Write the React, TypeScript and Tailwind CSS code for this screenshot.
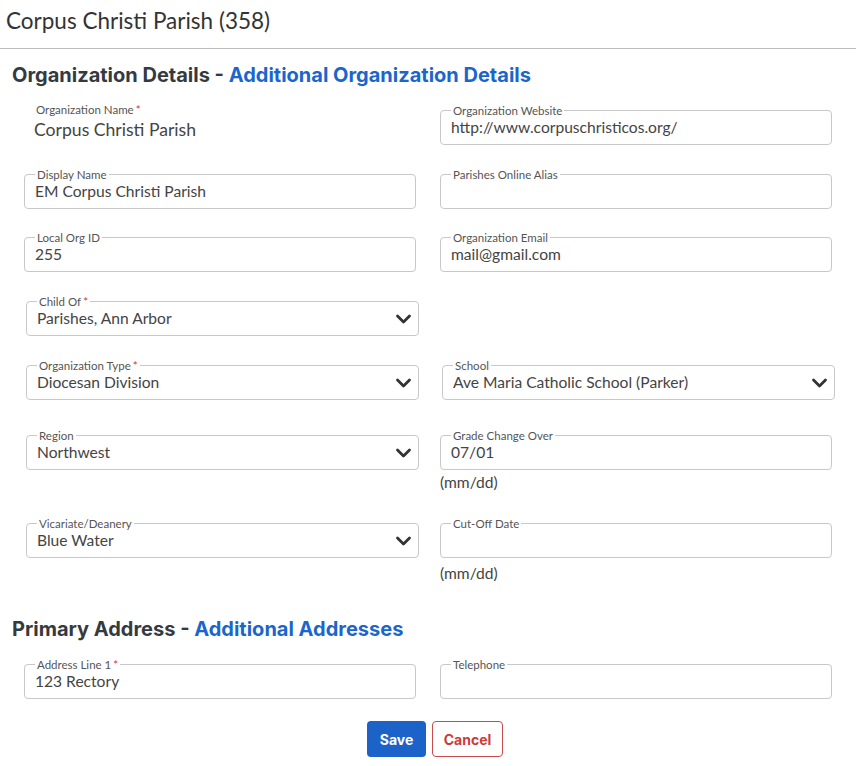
const body = { fontFamily: 'Lato, "Open Sans", sans-serif' };
const head = { fontFamily: 'Inter, Roboto, sans-serif' };

function Chevron() {
  return (
    <svg width="17" height="16" viewBox="0 0 17 16" className="shrink-0">
      <path d="M2.5 5 L8.5 11 L14.5 5" fill="none" stroke="#333" strokeWidth="2.8" strokeLinecap="round" strokeLinejoin="round" />
    </svg>
  );
}

function Label({ text, required }: { text: string; required?: boolean }) {
  return (
    <span className="absolute -top-[8px] left-[10px] bg-white px-[2px] text-[11.5px] leading-[16px] text-[#555]">
      {text}
      {required && <span className="ml-[2px] text-[#e03030]">*</span>}
    </span>
  );
}

function Field({ label, value, required, select, shift }: { label: string; value?: string; required?: boolean; select?: boolean; shift?: boolean }) {
  return (
    <div className={shift ? 'ml-[2px] -mr-[3px]' : ''}>
      <div className={`relative flex h-[35px] items-center rounded-[4px] border border-[#c8c8c8] pl-[10px] pt-[1px] ${select ? 'pr-[6px]' : 'pr-[14px]'}`}>
        <Label text={label} required={required} />
        <span className="flex-1 truncate text-[15.6px] text-[#444]">{value}</span>
        {select && <Chevron />}
      </div>
    </div>
  );
}

function Hint({ gap }: { gap: string }) {
  return <div className={`${gap} text-[15.6px] leading-[20px] text-[#444]`}>(mm/dd)</div>;
}

export default function App() {
  return (
    <div className="min-h-screen bg-white" style={body}>
      <div className="h-[49px] border-b border-[#bdbdbd] pl-[6px] pt-[6px] text-[22.5px] leading-[30px] text-[#333]">
        Corpus Christi Parish (358)
      </div>

      <div className="px-[12px]">
        <h2 className="mt-[12px] text-[20px] font-bold leading-[28px] text-[#343a40]" style={head}>
          Organization Details - <span className="text-[#1a66cc]">Additional Organization Details</span>
        </h2>
      </div>

      <div className="px-6">
        <div className="mt-[21px] grid grid-cols-2 gap-x-6">
          <div className="relative h-[35px]">
            <Label text="Organization Name" required />
            <div className="pl-[10px] pt-[9px] text-[17.6px] leading-[22px] text-[#444]">Corpus Christi Parish</div>
          </div>
          <Field label="Organization Website" value="http://www.corpuschristicos.org/" />
        </div>

        <div className="mt-[29px] grid grid-cols-2 gap-x-6">
          <Field label="Display Name" value="EM Corpus Christi Parish" />
          <Field label="Parishes Online Alias" />
        </div>

        <div className="mt-[28px] grid grid-cols-2 gap-x-6">
          <Field label="Local Org ID" value="255" />
          <Field label="Organization Email" value="mail@gmail.com" />
        </div>

        <div className="mt-[29px] grid grid-cols-2 gap-x-6">
          <Field label="Child Of" value="Parishes, Ann Arbor" required select shift />
          <div />
        </div>

        <div className="mt-[29px] grid grid-cols-2 gap-x-6">
          <Field label="Organization Type" value="Diocesan Division" required select shift />
          <Field label="School" value="Ave Maria Catholic School (Parker)" select shift />
        </div>

        <div className="mt-[35px] grid grid-cols-2 gap-x-6">
          <Field label="Region" value="Northwest" select shift />
          <div>
            <Field label="Grade Change Over" value="07/01" />
            <Hint gap="mt-[2px]" />
          </div>
        </div>

        <div className="mt-[31px] grid grid-cols-2 gap-x-6">
          <Field label="Vicariate/Deanery" value="Blue Water" select shift />
          <div>
            <Field label="Cut-Off Date" />
            <Hint gap="mt-[5px]" />
          </div>
        </div>
      </div>

      <div className="px-[12px]">
        <h2 className="mt-[32px] text-[20px] font-bold leading-[28px] text-[#343a40]" style={head}>
          Primary Address - <span className="text-[#1a66cc]">Additional Addresses</span>
        </h2>
      </div>

      <div className="px-6">
        <div className="mt-[21px] grid grid-cols-2 gap-x-6">
          <Field label="Address Line 1" value="123 Rectory" required />
          <Field label="Telephone" />
        </div>

        <div className="mt-[22px] flex justify-center gap-[6px] pl-[14px]">
          <button className="h-[36px] w-[59px] rounded-[4px] bg-[#1b63c8] text-[14px] font-bold text-white" style={head}>
            Save
          </button>
          <button className="h-[36px] w-[71px] rounded-[4px] border border-[#c94a4a] bg-white text-[14px] font-bold text-[#cc3b3b]" style={head}>
            Cancel
          </button>
        </div>
      </div>
    </div>
  );
}
